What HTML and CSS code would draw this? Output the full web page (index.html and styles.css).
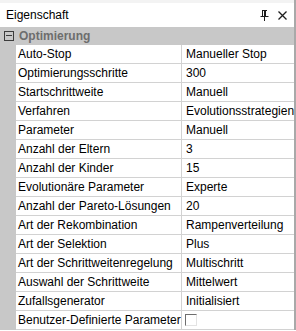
FILE: index.html
```html
<!DOCTYPE html>
<html lang="de">
<head>
  <meta charset="UTF-8">
  <title>Eigenschaft</title>
  <link rel="stylesheet" href="styles.css">
</head>
<body>

  <div class="panel">
    <!-- Title bar -->
    <div class="titlebar">
      <span class="title">Eigenschaft</span>
      <span class="tools">
        <svg class="pin" width="9" height="11" viewBox="0 0 9 11">
          <path d="M2 0.5h5M2.5 0.5v6M5.5 0.5v6M0.5 6.5h8M4.5 6.5v4.5" stroke="#1e1e1e" stroke-width="1" fill="none"/>
          <path d="M4 1h1.5v5.5h-1.5z" fill="#1e1e1e"/>
        </svg>
        <svg class="close" width="9" height="9" viewBox="0 0 9 9">
          <path d="M0.5 0.5l8 8M8.5 0.5l-8 8" stroke="#1e1e1e" stroke-width="1.3"/>
        </svg>
      </span>
    </div>

    <!-- Category -->
    <div class="category">
      <span class="toggle"></span>
      <span class="cat-name">Optimierung</span>
    </div>

    <!-- Properties -->
    <div class="grid">
      <div class="row"><span class="gutter"></span><span class="name">Auto-Stop</span><span class="value">Manueller Stop</span></div>
      <div class="row"><span class="gutter"></span><span class="name">Optimierungsschritte</span><span class="value">300</span></div>
      <div class="row"><span class="gutter"></span><span class="name">Startschrittweite</span><span class="value">Manuell</span></div>
      <div class="row"><span class="gutter"></span><span class="name">Verfahren</span><span class="value">Evolutionsstrategien</span></div>
      <div class="row"><span class="gutter"></span><span class="name">Parameter</span><span class="value">Manuell</span></div>
      <div class="row"><span class="gutter"></span><span class="name">Anzahl der Eltern</span><span class="value">3</span></div>
      <div class="row"><span class="gutter"></span><span class="name">Anzahl der Kinder</span><span class="value">15</span></div>
      <div class="row"><span class="gutter"></span><span class="name">Evolutionäre Parameter</span><span class="value">Experte</span></div>
      <div class="row"><span class="gutter"></span><span class="name">Anzahl der Pareto-Lösungen</span><span class="value">20</span></div>
      <div class="row"><span class="gutter"></span><span class="name">Art der Rekombination</span><span class="value">Rampenverteilung</span></div>
      <div class="row"><span class="gutter"></span><span class="name">Art der Selektion</span><span class="value">Plus</span></div>
      <div class="row"><span class="gutter"></span><span class="name">Art der Schrittweitenregelung</span><span class="value">Multischritt</span></div>
      <div class="row"><span class="gutter"></span><span class="name">Auswahl der Schrittweite</span><span class="value">Mittelwert</span></div>
      <div class="row"><span class="gutter"></span><span class="name">Zufallsgenerator</span><span class="value">Initialisiert</span></div>
      <div class="row"><span class="gutter"></span><span class="name">Benutzer-Definierte Parameter</span><span class="value"><span class="checkbox"></span></span></div>
    </div>
  </div>

</body>
</html>
```

FILE: styles.css
```css
/* Basic Reset */
* {
  margin: 0;
  padding: 0;
  box-sizing: border-box;
}

body {
  font-family: 'Liberation Sans', Arial, sans-serif;
  font-size: 12px;
  background-color: #ffffff;
  color: #000000;
  overflow: hidden;
}

.panel {
  width: 296px;
  border-right: 2px solid #a9a9a9;
}

/* Title bar */
.titlebar {
  height: 27px;
  border-top: 3px solid #f3f3f3;
  display: flex;
  align-items: center;
  justify-content: space-between;
  padding: 0 7px 0 6px;
  background-color: #ffffff;
}

.title {
  font-size: 12px;
}

.tools {
  display: flex;
  align-items: center;
  gap: 9px;
}

/* Category row */
.category {
  height: 18px;
  display: flex;
  align-items: center;
  background-color: #c8c8c8;
}

.toggle {
  width: 10px;
  height: 10px;
  margin: 0 5px 0 4px;
  border: 1px solid #3c3c3c;
  position: relative;
}

.toggle::after {
  content: "";
  position: absolute;
  left: 1px;
  right: 1px;
  top: 3px;
  height: 1px;
  background-color: #3c3c3c;
}

.cat-name {
  font-weight: bold;
  color: #6d6d6d;
}

/* Property rows */
.row {
  display: flex;
  height: 19px;
}

.gutter {
  width: 16px;
  background-color: #c8c8c8;
}

.name,
.value {
  display: flex;
  align-items: center;
  border-bottom: 1px solid #d2d2d2;
  white-space: nowrap;
  overflow: hidden;
}

.name {
  width: 166px;
  padding-left: 2px;
  border-right: 1px solid #d2d2d2;
}

.value {
  flex: 1;
  padding-left: 4px;
}

.checkbox {
  width: 12px;
  height: 12px;
  margin-left: -1px;
  border-top: 1px solid #6e6e6e;
  border-left: 1px solid #6e6e6e;
  border-right: 1px solid #e3e3e3;
  border-bottom: 1px solid #e3e3e3;
  background-color: #ffffff;
}
```
